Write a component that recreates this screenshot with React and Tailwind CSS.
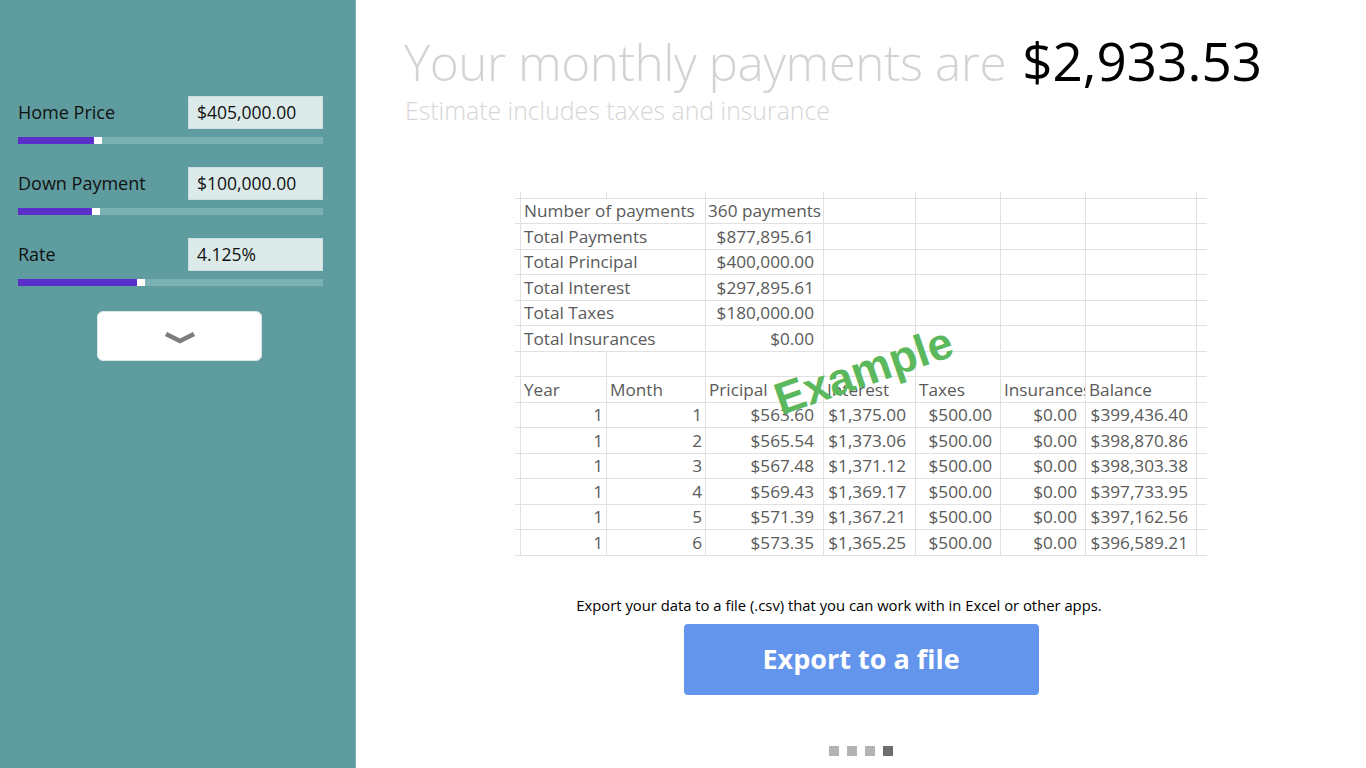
import React from 'react';

const sliders = [
  { label: 'Home Price', value: '$405,000.00', fill: 76 },
  { label: 'Down Payment', value: '$100,000.00', fill: 74 },
  { label: 'Rate', value: '4.125%', fill: 119 },
];

const summary = [
  ['Number of payments', '360 payments'],
  ['Total Payments', '$877,895.61'],
  ['Total Principal', '$400,000.00'],
  ['Total Interest', '$297,895.61'],
  ['Total Taxes', '$180,000.00'],
  ['Total Insurances', '$0.00'],
];

const payments = [
  ['1', '1', '$563.60', '$1,375.00', '$500.00', '$0.00', '$399,436.40'],
  ['1', '2', '$565.54', '$1,373.06', '$500.00', '$0.00', '$398,870.86'],
  ['1', '3', '$567.48', '$1,371.12', '$500.00', '$0.00', '$398,303.38'],
  ['1', '4', '$569.43', '$1,369.17', '$500.00', '$0.00', '$397,733.95'],
  ['1', '5', '$571.39', '$1,367.21', '$500.00', '$0.00', '$397,162.56'],
  ['1', '6', '$573.35', '$1,365.25', '$500.00', '$0.00', '$396,589.21'],
];

const cols = ['w-[86px]', 'w-[99px]', 'w-[118px]', 'w-[92px]', 'w-[85px]', 'w-[85px]', 'w-[111px]'];
const restCols = cols.slice(3);

function Cell({ w, children, align = 'left', pad = 'pr-[9px]' }) {
  return (
    <div
      className={`${w} h-full shrink-0 border-r border-[#e1e1e1] overflow-hidden whitespace-nowrap flex items-center ${
        align === 'right' ? `justify-end ${pad}` : 'pl-[3px]'
      }`}
    >
      {children}
    </div>
  );
}

function Row({ cells = [], aligns = [], pads = [] }) {
  return (
    <div className="flex h-[25.5px] border-b border-[#e1e1e1]">
      <div className="w-[6px] h-full shrink-0 border-r border-[#e1e1e1]" />
      {cols.map((w, i) => (
        <Cell key={i} w={w} align={aligns[i]} pad={pads[i]}>
          {cells[i]}
        </Cell>
      ))}
      <div className="w-[10px] h-full shrink-0" />
    </div>
  );
}

// summary rows: label spills over the empty second column, like in Excel
function SummaryRow({ label, value, first }) {
  return (
    <div className="flex h-[25.5px] border-b border-[#e1e1e1]">
      <div className="w-[6px] h-full shrink-0 border-r border-[#e1e1e1]" />
      <div className="w-[185px] h-full shrink-0 border-r border-[#e1e1e1] whitespace-nowrap flex items-center pl-[3px]">
        {label}
      </div>
      <div
        className={`w-[118px] h-full shrink-0 border-r border-[#e1e1e1] whitespace-nowrap flex items-center ${
          first ? 'pl-[2px]' : 'justify-end pr-[9px]'
        }`}
      >
        {value}
      </div>
      {restCols.map((w, i) => (
        <div key={i} className={`${w} h-full shrink-0 border-r border-[#e1e1e1]`} />
      ))}
      <div className="w-[10px] h-full shrink-0" />
    </div>
  );
}

export default function App() {
  return (
    <div className="flex w-[1366px] h-[768px] overflow-hidden bg-white" style={{ fontFamily: '"Open Sans", "Noto Sans", sans-serif' }}>
      {/* SIDEBAR */}
      <div className="w-[356px] shrink-0 h-full bg-[#5f9c9f] border-r border-[#7fb3b5] pl-[18px] pr-[32px] pt-[96px]">
        {sliders.map((s) => (
          <div key={s.label} className="mb-[23px]">
            <div className="flex items-center justify-between h-[33px]">
              <span className="text-[18px] text-[#111]">{s.label}</span>
              <div className="w-[135px] h-[33px] bg-[#dcebea] border border-[#c9dede] flex items-center pl-[8px] text-[17.5px] text-[#111]">
                {s.value}
              </div>
            </div>
            <div className="mt-[8px] h-[7px] bg-[#7ab1b2] flex">
              <div className="h-full bg-[#5b2fc9]" style={{ width: s.fill }} />
              <div className="h-full w-[8px] bg-white" />
            </div>
          </div>
        ))}
        <div className="pl-[79px] pt-[2px]">
          <button className="w-[165px] h-[50px] bg-white rounded-[6px] border border-[#d9e6e6] flex items-center justify-center">
            <svg width="34" height="14" viewBox="0 0 34 14" className="mt-[3px]">
              <path d="M3 3 L17 10 L31 3" fill="none" stroke="#7c7c7c" strokeWidth="4.5" strokeLinejoin="miter" />
            </svg>
          </button>
        </div>
      </div>

      {/* MAIN */}
      <div className="flex-1 h-full flex flex-col">
        <div className="pl-[48px] pt-[21px]">
          <div className="flex items-baseline whitespace-nowrap">
            <span className="text-[49.5px] font-light text-[#d3d3d3] tracking-[-0.5px]">Your monthly payments are</span>
            <span className="ml-[16px] text-[53px] text-black font-normal">$2,933.53</span>
          </div>
          <div className="text-[24.8px] font-light text-[#d6d6d6] -mt-[9px] pl-[1px]">Estimate includes taxes and insurance</div>
        </div>

        {/* TABLE IMAGE */}
        <div className="relative self-center mt-[63px] w-[692px] text-[17.2px] text-[#5a5a5a]">
          <div className="flex h-[7px] border-b border-[#e1e1e1]">
            <div className="w-[6px] shrink-0 border-r border-[#e1e1e1]" />
            {cols.map((w, i) => (
              <div key={i} className={`${w} shrink-0 border-r border-[#e1e1e1]`} />
            ))}
          </div>
          {summary.map(([k, v], i) => (
            <SummaryRow key={k} label={k} value={v} first={i === 0} />
          ))}
          <Row />
          <Row cells={['Year', 'Month', 'Pricipal', 'Interest', 'Taxes', 'Insurances', 'Balance']} />
          {payments.map((r, i) => (
            <Row
              key={i}
              cells={r}
              aligns={['right', 'right', 'right', 'right', 'right', 'right', 'right']}
              pads={['pr-[3px]', 'pr-[3px]', 'pr-[9px]', 'pr-[9px]', 'pr-[8px]', 'pr-[8px]', 'pr-[8px]']}
            />
          ))}
          <div
            className="absolute left-[256px] top-[156px] -rotate-[19deg] text-[45px] font-bold text-[#5cb85c] leading-none"
            style={{ fontFamily: '"Liberation Sans", Arial, sans-serif' }}
          >
            Example
          </div>
        </div>

        <div className="mt-[38px] pr-[44px] text-center text-[14.8px] text-black">
          Export your data to a file (.csv) that you can work with in Excel or other apps.
        </div>
        <div className="flex justify-center mt-[8px]">
          <button className="w-[355px] h-[71px] bg-[#6495ed] rounded-[4px] text-white text-[27px] font-bold">
            Export to a file
          </button>
        </div>

        <div className="flex justify-center gap-[8px] mt-[51px]">
          <div className="w-[10px] h-[10px] bg-[#b3b3b3]" />
          <div className="w-[10px] h-[10px] bg-[#b3b3b3]" />
          <div className="w-[10px] h-[10px] bg-[#b3b3b3]" />
          <div className="w-[10px] h-[10px] bg-[#6e6e6e]" />
        </div>
      </div>
    </div>
  );
}
